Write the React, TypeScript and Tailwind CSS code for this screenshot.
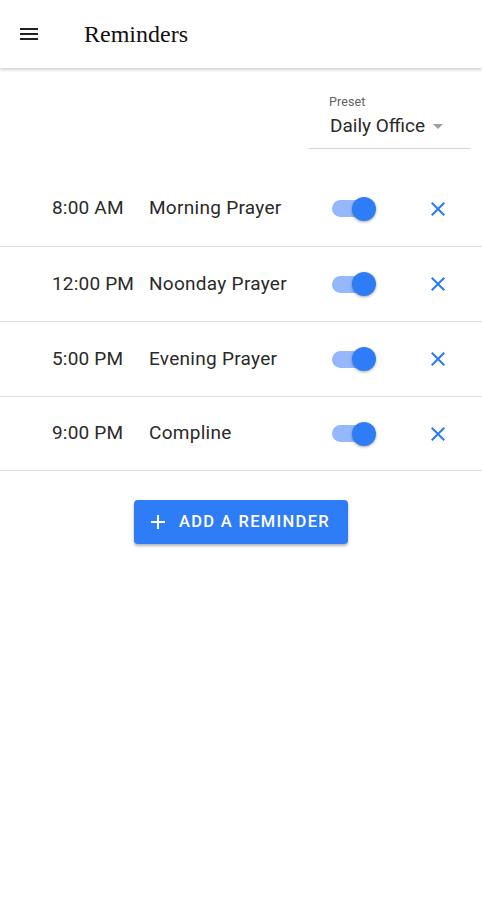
import React, { useState } from 'react';

interface Reminder {
  id: number;
  time: string;
  name: string;
  enabled: boolean;
}

const INITIAL: Reminder[] = [
  { id: 1, time: '8:00 AM', name: 'Morning Prayer', enabled: true },
  { id: 2, time: '12:00 PM', name: 'Noonday Prayer', enabled: true },
  { id: 3, time: '5:00 PM', name: 'Evening Prayer', enabled: true },
  { id: 4, time: '9:00 PM', name: 'Compline', enabled: true },
];

const MenuIcon = () => (
  <svg width="24" height="24" viewBox="0 0 24 24" fill="#212121">
    <path d="M3 18h18v-2H3v2zm0-5h18v-2H3v2zm0-7v2h18V6H3z" />
  </svg>
);

const CloseIcon = () => (
  <svg width="24" height="24" viewBox="0 0 24 24" fill="#2979ff">
    <path d="M19 6.41 17.59 5 12 10.59 6.41 5 5 6.41 10.59 12 5 17.59 6.41 19 12 13.41 17.59 19 19 17.59 13.41 12z" />
  </svg>
);

const Toggle = ({ on, onClick }: { on: boolean; onClick: () => void }) => (
  <button onClick={onClick} className="relative w-[46px] h-[24px] flex items-center focus:outline-none">
    <span className={`block w-[42px] h-[17px] ml-[2px] rounded-full ${on ? 'bg-[#94b8fb]' : 'bg-[#bdbdbd]'}`} />
    <span
      className={`absolute top-[0px] h-[24px] w-[24px] rounded-full shadow-[0_1px_3px_rgba(0,0,0,0.35)] ${
        on ? 'left-[22px] bg-[#2f7df6]' : 'left-0 bg-[#fafafa]'
      }`}
    />
  </button>
);

const App: React.FC = () => {
  const [items, setItems] = useState<Reminder[]>(INITIAL);

  const toggle = (id: number) =>
    setItems(items.map((r) => (r.id === id ? { ...r, enabled: !r.enabled } : r)));
  const remove = (id: number) => setItems(items.filter((r) => r.id !== id));

  return (
    <div className="min-h-[900px] bg-white" style={{ fontFamily: 'Roboto, "Noto Sans", sans-serif' }}>
      {/* App bar */}
      <header className="h-[68px] flex items-center bg-white shadow-[0_2px_3px_rgba(0,0,0,0.18)] relative z-10">
        <button className="ml-[17px] text-[#212121]">
          <MenuIcon />
        </button>
        <h1
          className="ml-[43px] text-[24px] text-[#111] leading-none"
          style={{ fontFamily: '"Liberation Serif", serif' }}
        >
          Reminders
        </h1>
      </header>

      {/* Preset select */}
      <div className="flex justify-end pr-[12px] pt-[27px]">
        <div className="w-[161px] border-b border-[#d6d6d6] pb-[11px]">
          <div className="pl-[20px] text-[12.5px] leading-[14px] text-[#616161] tracking-[0.01em]">Preset</div>
          <div className="pl-[21px] flex items-center mt-[6px]">
            <span className="text-[19px] leading-[22px] text-[#2a2a2a]">Daily Office</span>
            <span className="ml-[8px] mt-[1px] w-0 h-0 border-l-[5px] border-r-[5px] border-t-[5px] border-l-transparent border-r-transparent border-t-[#9e9e9e]" />
          </div>
        </div>
      </div>

      {/* Reminder rows */}
      <div className="mt-[22px]">
        {items.map((r, i) => (
          <div
            key={r.id}
            className={`h-[75px] flex items-center ${i > 0 ? 'border-t border-[#e0e0e0]' : ''} ${
              i === items.length - 1 ? 'border-b border-[#e0e0e0]' : ''
            }`}
          >
            <span className="ml-[52px] w-[97px] text-[19px] text-[#2a2a2a] tracking-[0.01em]">{r.time}</span>
            <span className="flex-1 text-[19px] text-[#2a2a2a] tracking-[0.015em]">{r.name}</span>
            <Toggle on={r.enabled} onClick={() => toggle(r.id)} />
            <button onClick={() => remove(r.id)} className="ml-[50px] mr-[32px]">
              <CloseIcon />
            </button>
          </div>
        ))}
      </div>

      {/* Add button */}
      <div className="flex justify-center pt-[29px]">
        <button className="h-[44px] w-[214px] pr-[6px] flex items-center justify-center gap-[9px] rounded-[4px] bg-[#2f7df6] text-white text-[16.5px] font-medium tracking-[0.08em] shadow-[0_2px_3px_rgba(0,0,0,0.3)]">
          <svg width="24" height="24" viewBox="0 0 24 24" fill="white">
            <path d="M19 13h-6v6h-2v-6H5v-2h6V5h2v6h6v2z" />
          </svg>
          ADD A REMINDER
        </button>
      </div>
    </div>
  );
};

export default App;
